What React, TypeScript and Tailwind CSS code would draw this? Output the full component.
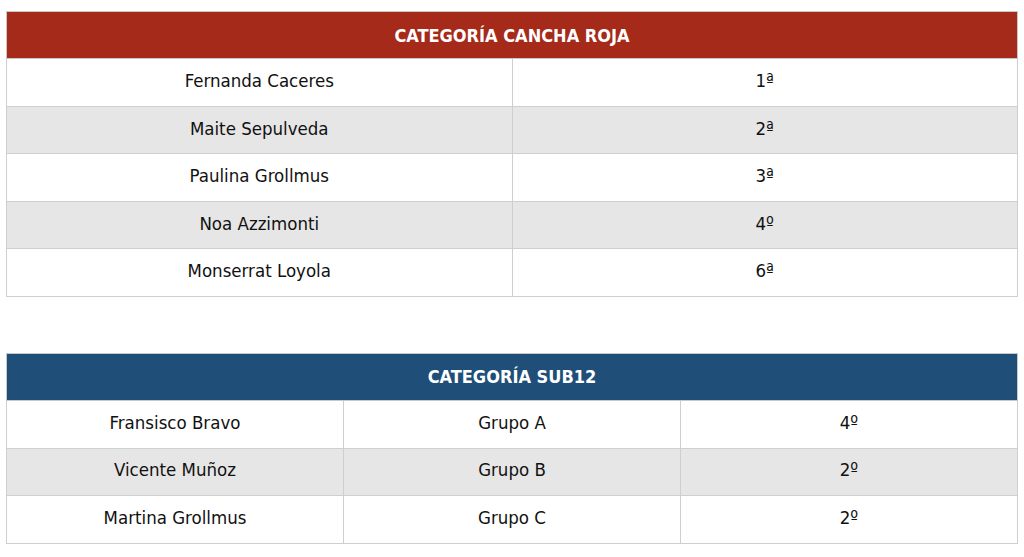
import React from "react";

const font = { fontFamily: '"DejaVu Sans Condensed", "Liberation Sans", sans-serif' };

const canchaRoja = [
  ["Fernanda Caceres", "1ª"],
  ["Maite Sepulveda", "2ª"],
  ["Paulina Grollmus", "3ª"],
  ["Noa Azzimonti", "4º"],
  ["Monserrat Loyola", "6ª"],
];

const sub12 = [
  ["Fransisco Bravo", "Grupo A", "4º"],
  ["Vicente Muñoz", "Grupo B", "2º"],
  ["Martina Grollmus", "Grupo C", "2º"],
];

function ResultTable({ title, color, rows }: { title: string; color: string; rows: string[][] }) {
  const cols = rows[0].length;
  return (
    <table className="w-full border-collapse table-fixed text-[18.5px] text-[#111]">
      <thead>
        <tr>
          <th colSpan={cols} className={`${color} h-[47px] border border-[#c8c8c8] text-white font-bold text-[18px]`}>
            {title}
          </th>
        </tr>
      </thead>
      <tbody>
        {rows.map((r, i) => (
          <tr key={i} className={i % 2 === 1 ? "bg-[#e6e6e6]" : "bg-white"}>
            {r.map((c, j) => (
              <td key={j} className="h-[47.6px] border border-[#cfcfcf] text-center align-middle pb-[3px]">
                {c}
              </td>
            ))}
          </tr>
        ))}
      </tbody>
    </table>
  );
}

export default function App() {
  return (
    <div className="w-[1024px] h-[557px] bg-white px-[6px] pt-[11px]" style={font}>
      <div className="flex flex-col gap-[56px]">
        <ResultTable title="CATEGORÍA CANCHA ROJA" color="bg-[#a52a19]" rows={canchaRoja} />
        <ResultTable title="CATEGORÍA SUB12" color="bg-[#1f4e79]" rows={sub12} />
      </div>
    </div>
  );
}
